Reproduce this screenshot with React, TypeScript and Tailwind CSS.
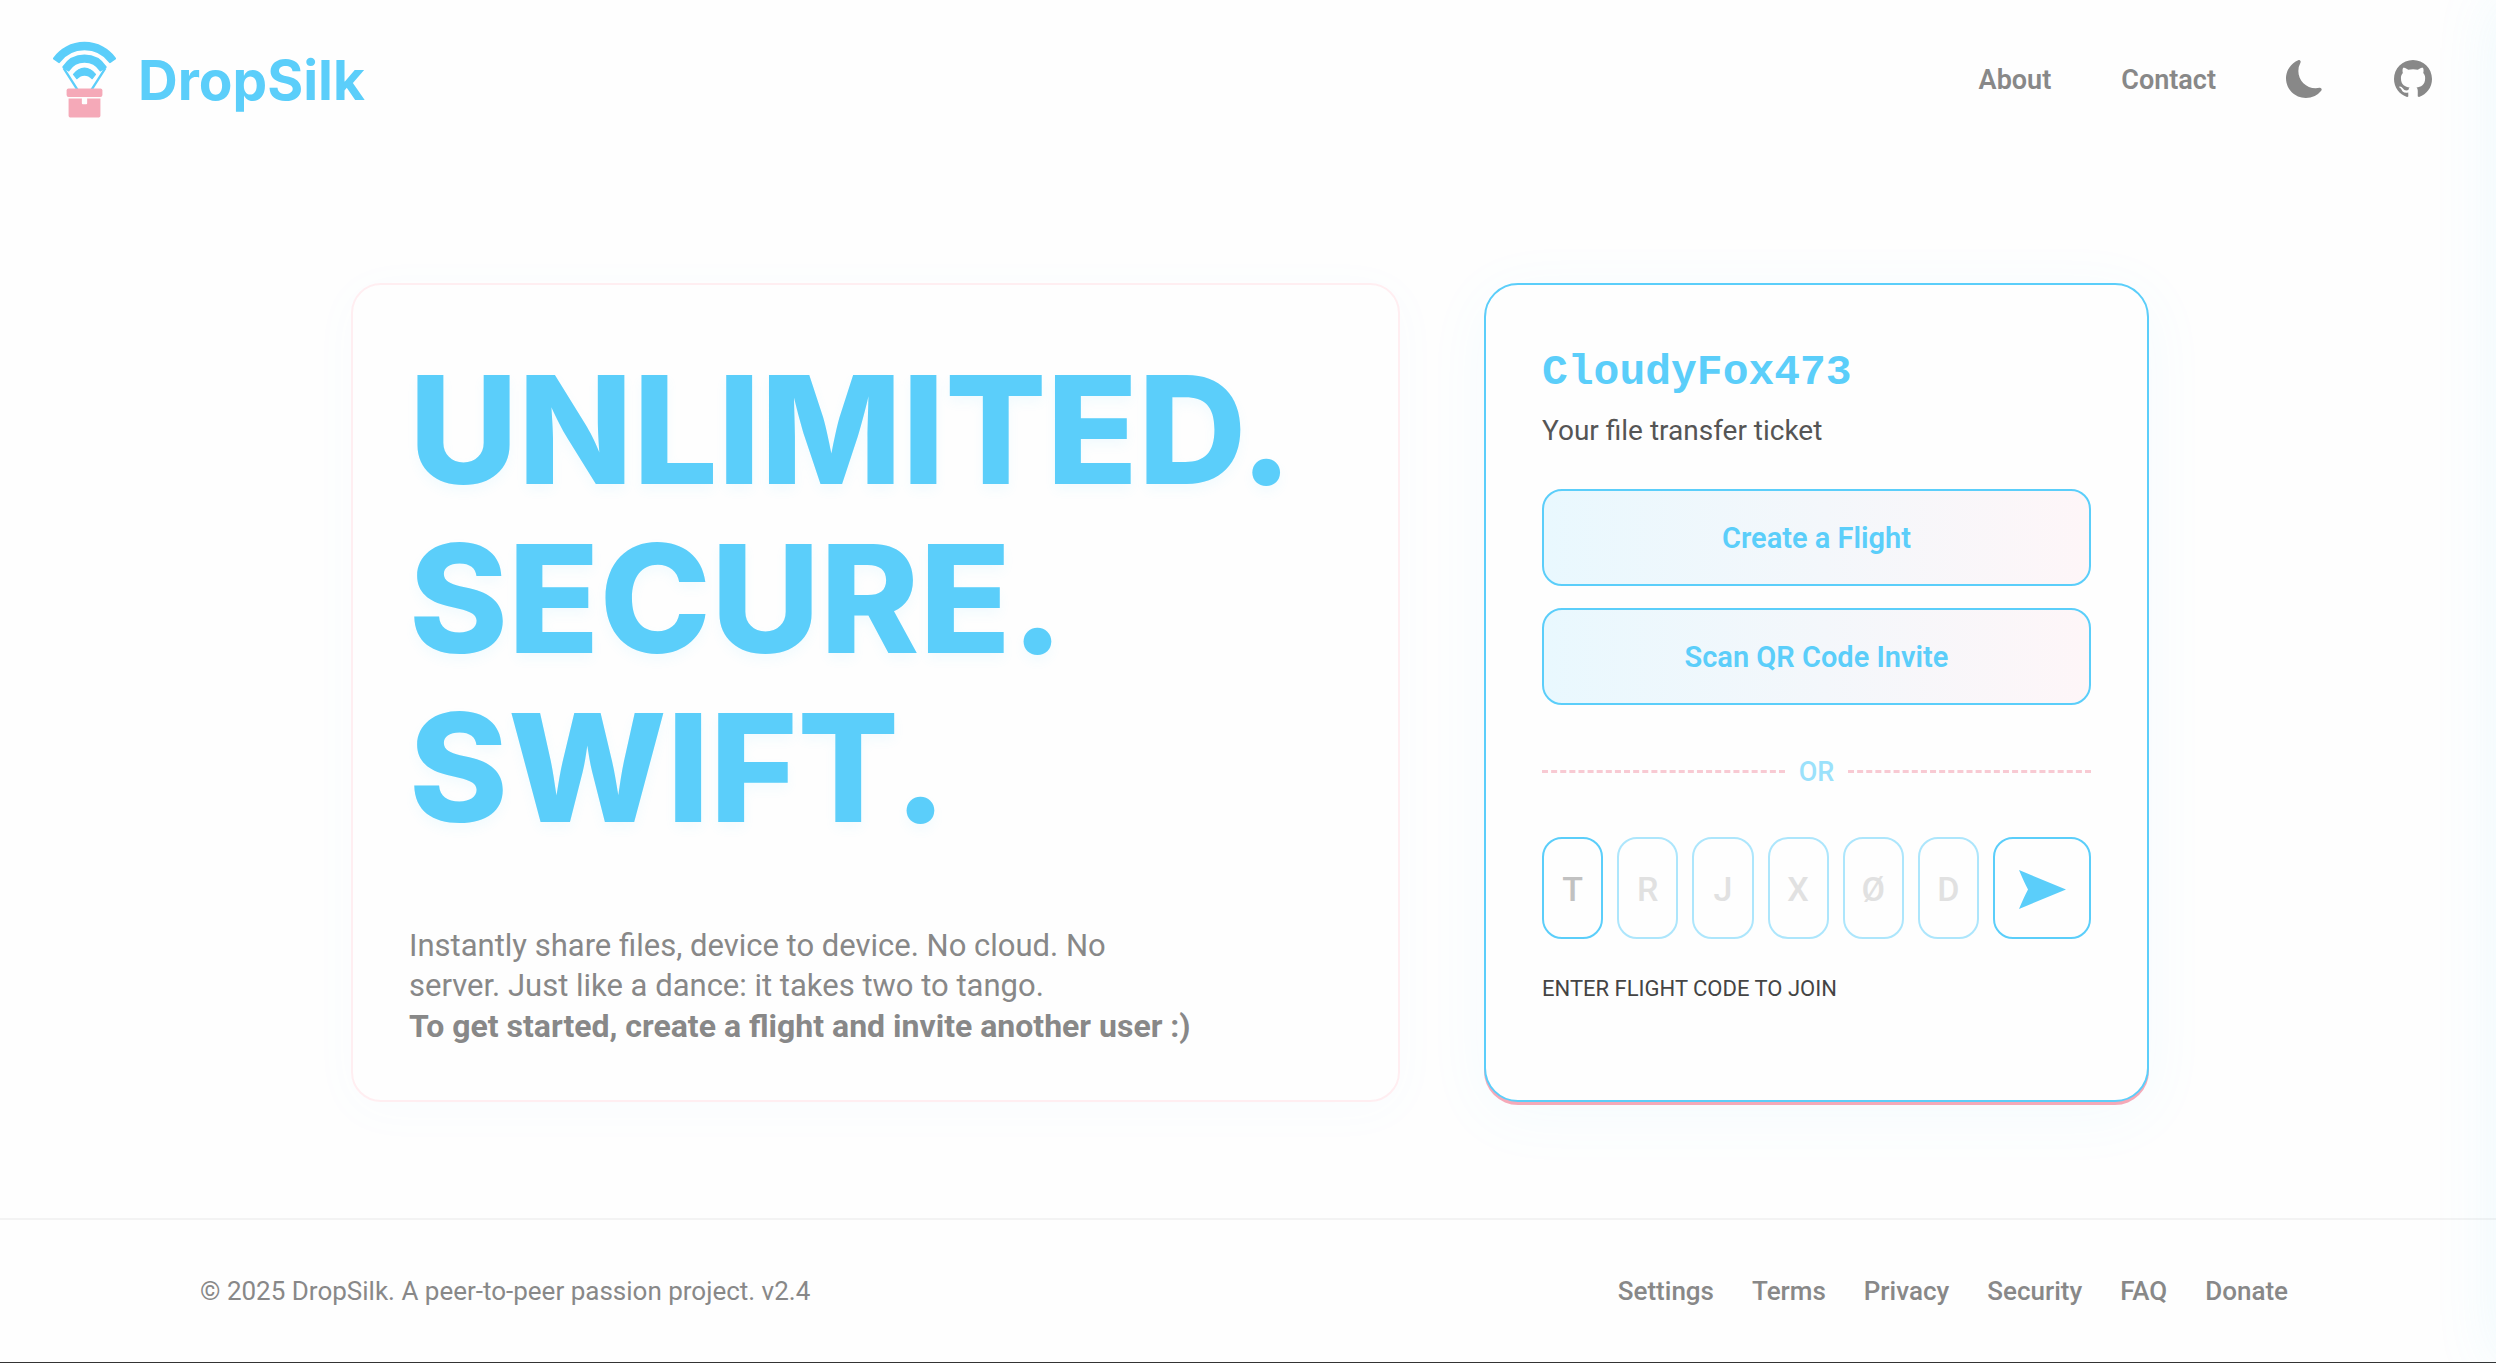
import { BsGithub, BsMoonFill } from "react-icons/bs";

const footerLinks = ["Settings", "Terms", "Privacy", "Security", "FAQ", "Donate"];
const codeHints = ["T", "R", "J", "X", "Ø", "D"];

function Logo() {
  return (
    <svg viewBox="22 19 190 231" className="h-[77px] w-[63px]" aria-hidden="true">
      <g fill="#5bcefa" stroke="#5bcefa" strokeLinejoin="round">
        <path strokeWidth="8" d="M26 71A113 113 0 0 1 208 71L194 81A96 96 0 0 0 40 81Z" />
        <path strokeWidth="6" d="M53 97A76 76 0 0 1 181 97L165 107A57 57 0 0 0 69 107Z" />
        <path strokeWidth="4" d="M84 119Q99 100 117 100Q135 100 150 119L140 132Q130 121 117 121Q104 121 94 132Z" />
      </g>
      <path d="M54 100L97 167M180 100L137 167" fill="none" stroke="#5bcefa" strokeWidth="7" />
      <rect x="63" y="162" width="108" height="25" rx="6" fill="#f5a9b8" />
      <path
        d="M69 192H109V206Q109 209 112 209H122Q125 209 125 206V192H165V244Q165 249 160 249H74Q69 249 69 244Z"
        fill="#f5a9b8"
      />
    </svg>
  );
}

function Header() {
  return (
    <header className="flex items-center justify-between pt-10 pr-16 pb-12 pl-[53px]">
      <a href="#home" className="flex items-center gap-[22px] font-['Inter',sans-serif] text-[55px] leading-[76px] font-bold text-[#5bcefa]">
        <Logo />
        <span className="pt-0.5">DropSilk</span>
      </a>
      <nav className="flex items-center gap-[70px] text-[27px] font-semibold text-[#888888]">
        <a href="#about" className="pt-0.5">
          About
        </a>
        <a href="#contact" className="pt-0.5">
          Contact
        </a>
        <button type="button" aria-label="Toggle dark mode">
          <BsMoonFill className="size-[38px]" />
        </button>
        <a href="#github" aria-label="GitHub">
          <BsGithub className="size-[38px]" />
        </a>
      </nav>
    </header>
  );
}

function Hero() {
  return (
    <section className="flex-1 rounded-[30px] border-2 border-[#ffeef1] px-14 pt-[60px] pb-[53px] shadow-[0_8px_48px_rgba(91,206,250,0.03)]">
      <h1 className="font-['Inter',sans-serif] text-[150px] leading-[169px] font-extrabold text-[#5bcefa] [text-shadow:0_6px_12px_rgba(91,206,250,0.07)]">
        UNLIMITED.
        <br />
        SECURE.
        <br />
        SWIFT.
      </h1>
      <p className="mt-[74px] text-[31px] leading-10 text-[#888888]">
        Instantly share files, device to device. No cloud. No
        <br />
        server. Just like a dance: it takes two to tango.
        <br />
        <strong className="text-[32px] font-bold">To get started, create a flight and invite another user :)</strong>
      </p>
    </section>
  );
}

function TicketButton({ label }: { label: string }) {
  return (
    <button
      type="button"
      className="h-[97px] rounded-[20px] border-2 border-[#5bcefa] bg-linear-to-r from-[#e9f8fe] to-[#fef6f8] pt-1 text-[29px] font-semibold text-[#5bcefa]"
    >
      {label}
    </button>
  );
}

function Ticket() {
  return (
    <section className="flex w-[665px] flex-col rounded-[34px] border-2 border-[#5bcefa] bg-[#fefefe] px-14 pt-[60px] shadow-[0_3px_0_#f5a9b8,0_12px_64px_rgba(91,206,250,0.06)]">
      <h2 className="font-['Liberation_Mono',monospace] text-[43px] leading-[56px] font-bold text-[#5bcefa]">
        CloudyFox473
      </h2>
      <p className="mt-[10px] text-[28px] leading-10 text-[#555555]">Your file transfer ticket</p>
      <div className="mt-[38px] flex flex-col gap-[22px]">
        <TicketButton label="Create a Flight" />
        <TicketButton label="Scan QR Code Invite" />
      </div>
      <div className="mt-[47px] flex items-center gap-[14px] opacity-60">
        <span className="flex-1 border-t-3 border-dashed border-[#f5a9b8]" />
        <span className="text-[27px] leading-10 font-medium text-[#5bcefa]">OR</span>
        <span className="flex-1 border-t-3 border-dashed border-[#f5a9b8]" />
      </div>
      <form className="mt-[45px] flex h-[102px] gap-[14px]">
        {codeHints.map((hint, i) => (
          <input
            key={hint}
            aria-label={`Flight code character ${i + 1}`}
            placeholder={hint}
            maxLength={1}
            className="w-0 flex-1 rounded-[20px] border-2 border-[#ade6fc] pt-1 text-center text-[34px] font-medium placeholder:text-[#e1e1e1] first:border-[#5bcefa] first:placeholder:text-[#c1c1c1]"
          />
        ))}
        <button
          type="submit"
          aria-label="Join flight"
          className="flex w-[98px] items-center justify-center rounded-[20px] border-2 border-[#5bcefa] pt-1"
        >
          <svg viewBox="0 0 47 39" className="h-[39px] w-[47px]" fill="#5bcefa" aria-hidden="true">
            <path d="M0 0L47 19.5L0 39Q5 27 9 19.5Q5 12 0 0Z" />
          </svg>
        </button>
      </form>
      <p className="mt-[35px] text-[22px] leading-[30px] text-[#444444]">ENTER FLIGHT CODE TO JOIN</p>
    </section>
  );
}

function Footer() {
  return (
    <footer className="border-t-2 border-[#f3f3f3]">
      <div className="mx-auto flex w-full max-w-[2096px] items-center justify-between py-[52px] pr-2 text-[26px] leading-[38px] text-[#888888]">
        <p>© 2025 DropSilk. A peer-to-peer passion project. v2.4</p>
        <nav className="flex gap-[38px] font-medium">
          {footerLinks.map((name) => (
            <a key={name} href={`#${name.toLowerCase()}`}>
              {name}
            </a>
          ))}
        </nav>
      </div>
    </footer>
  );
}

export default function App() {
  return (
    <div className="flex min-h-screen flex-col overflow-hidden border-b border-[#333333] bg-[#fefefe] font-['Roboto',sans-serif]">
      <Header />
      <main className="flex flex-1 items-center">
        <div className="mx-auto flex w-full max-w-[1802px] gap-[84px] pl-1">
          <Hero />
          <Ticket />
        </div>
      </main>
      <Footer />
      <div className="pointer-events-none fixed inset-y-0 left-full w-96 shadow-[0_0_60px_rgba(91,206,250,0.1)]" />
    </div>
  );
}
